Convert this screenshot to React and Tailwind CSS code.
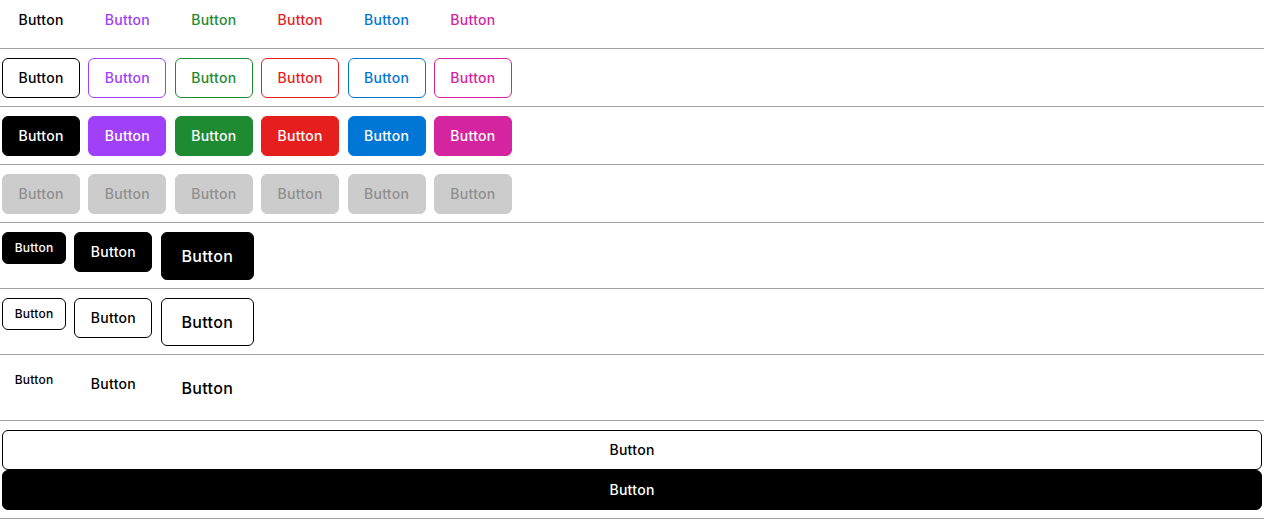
import React from "react";

const colors = [
  { text: "text-black", border: "border-black", fill: "bg-black" },
  { text: "text-[#a040f8]", border: "border-[#a040f8]", fill: "bg-[#a040f8]" },
  { text: "text-[#1e8a32]", border: "border-[#1e8a32]", fill: "bg-[#1e8a32]" },
  { text: "text-[#e61e1e]", border: "border-[#e61e1e]", fill: "bg-[#e61e1e]" },
  { text: "text-[#0076d6]", border: "border-[#0076d6]", fill: "bg-[#0076d6]" },
  { text: "text-[#d4249f]", border: "border-[#d4249f]", fill: "bg-[#d4249f]" },
];

const sizes = [
  "w-16 h-8 text-xs",
  "w-[78px] h-10 text-sm",
  "w-[93px] h-12 text-base",
];

const base = "inline-flex shrink-0 items-center justify-center rounded-md border font-medium tracking-[0.02em]";

const Rule = () => <div className="h-px bg-[#a3a3a3]" />;

const Row = ({ first = false, children }) => (
  <div className={`flex items-start gap-[8.4px] px-[2px] pb-2 ${first ? "" : "pt-[9px]"}`}>
    {children}
  </div>
);

export default function App() {
  return (
    <div className="bg-white font-[family-name:Inter,sans-serif] text-black">
      {/* text buttons */}
      <Row first>
        {colors.map((c, i) => (
          <button key={i} className={`${base} w-[78px] h-10 text-sm border-transparent ${c.text}`}>Button</button>
        ))}
      </Row>
      <Rule />

      {/* outline */}
      <Row>
        {colors.map((c, i) => (
          <button key={i} className={`${base} w-[78px] h-10 text-sm bg-white ${c.border} ${c.text}`}>Button</button>
        ))}
      </Row>
      <Rule />

      {/* solid */}
      <Row>
        {colors.map((c, i) => (
          <button key={i} className={`${base} w-[78px] h-10 text-sm text-white ${c.border} ${c.fill}`}>Button</button>
        ))}
      </Row>
      <Rule />

      {/* disabled */}
      <Row>
        {colors.map((c, i) => (
          <button key={i} disabled className={`${base} w-[78px] h-10 text-sm border-[#cccccc] bg-[#cccccc] text-[#8f8f8f]`}>Button</button>
        ))}
      </Row>
      <Rule />

      {/* sizes solid */}
      <Row>
        {sizes.map((s, i) => (
          <button key={i} className={`${base} ${s} border-black bg-black text-white`}>Button</button>
        ))}
      </Row>
      <Rule />

      {/* sizes outline */}
      <Row>
        {sizes.map((s, i) => (
          <button key={i} className={`${base} ${s} border-black bg-white`}>Button</button>
        ))}
      </Row>
      <Rule />

      {/* sizes ghost */}
      <Row>
        {sizes.map((s, i) => (
          <button key={i} className={`${base} ${s} border-transparent`}>Button</button>
        ))}
      </Row>
      <Rule />

      {/* full width */}
      <div className="flex flex-col px-[2px] pt-[9px] pb-2">
        <button className={`${base} h-10 w-full text-sm border-black bg-white`}>Button</button>
        <button className={`${base} h-10 w-full text-sm border-black bg-black text-white`}>Button</button>
      </div>
      <Rule />
    </div>
  );
}
